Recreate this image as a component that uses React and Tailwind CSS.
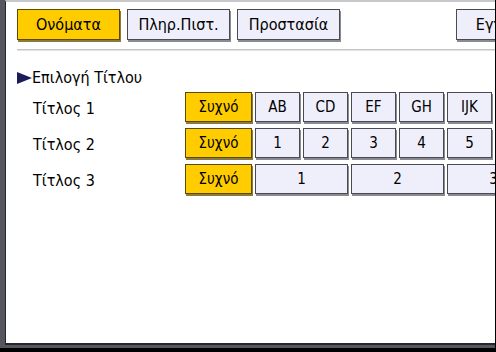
import React from "react";

const font = { fontFamily: '"DejaVu Sans Condensed", "DejaVu Sans", sans-serif' };

function Btn({ children, w, yellow }) {
  return (
    <div
      className={`h-[30px] shrink-0 flex items-center justify-center border text-[15px] text-black ${
        yellow
          ? "bg-[#ffcc00] border-[#5c4a00] shadow-[1px_2px_0_#8a7a40]"
          : "bg-[#efeffc] border-[#4a4a52] shadow-[1px_2px_0_#8a8a92]"
      }`}
      style={{ width: w }}
    >
      {children}
    </div>
  );
}

function Row({ label, items, wide }) {
  return (
    <div className="flex items-start h-[30px]">
      <div className="w-[179px] pl-[27px] pt-[7px] text-[16px] leading-[20px] text-black shrink-0">
        {label}
      </div>
      <div className="flex gap-[3px]">
        <Btn w={67} yellow>
          Συχνό
        </Btn>
        {items.map((t) => (
          <Btn key={t} w={wide ? 93 : 45}>
            {t}
          </Btn>
        ))}
      </div>
    </div>
  );
}

export default function App() {
  const tabs = ["Ονόματα", "Πληρ.Πιστ.", "Προστασία", "Εγγραφή"];
  return (
    <div className="w-[496px] h-[352px] bg-black overflow-hidden" style={font}>
      <div className="w-[495px] h-[348px] bg-[#56565e] pl-[5px] pb-[3px]">
        <div className="w-full h-full bg-white border-l border-b-2 border-[#26262c] border-t-2 border-t-[#c8c8cc] overflow-hidden">
          <div className="pl-[11px] pt-[7px]">
            <div className="flex w-[600px]">
              {tabs.map((t, i) => (
                <div
                  key={t}
                  className={`w-[103px] h-[31px] shrink-0 flex items-center border text-[16px] text-black ${
                    i === 0
                      ? "bg-[#ffcc00] border-[#5c4a00] shadow-[1px_2px_0_#8a7a40] justify-center"
                      : "bg-[#efeffc] border-[#4a4a52] shadow-[1px_2px_0_#8a8a92] justify-center"
                  } ${i === 1 || i === 2 ? "ml-[7px]" : ""} ${i === 3 ? "ml-[116px]" : ""}`}
                >
                  {t}
                </div>
              ))}
            </div>
            <div className="mt-[9px] h-[2px] bg-[#c4c4c8] border-b border-[#e4e4e6]" />
            <div className="mt-[19px] flex items-center h-[16px] text-[16px] text-black">
              <svg width="15" height="12" viewBox="0 0 15 12" className="shrink-0">
                <polygon points="0,0 15,6 0,12" fill="#1c1c5a" />
              </svg>
              <span className="leading-[16px]">Επιλογή Τίτλου</span>
            </div>
          </div>
          <div className="mt-[6px] flex flex-col gap-[6px]">
            <Row label="Τίτλος 1" items={["AB", "CD", "EF", "GH", "IJK"]} />
            <Row label="Τίτλος 2" items={["1", "2", "3", "4", "5"]} />
            <Row label="Τίτλος 3" items={["1", "2", "3"]} wide />
          </div>
        </div>
      </div>
    </div>
  );
}
